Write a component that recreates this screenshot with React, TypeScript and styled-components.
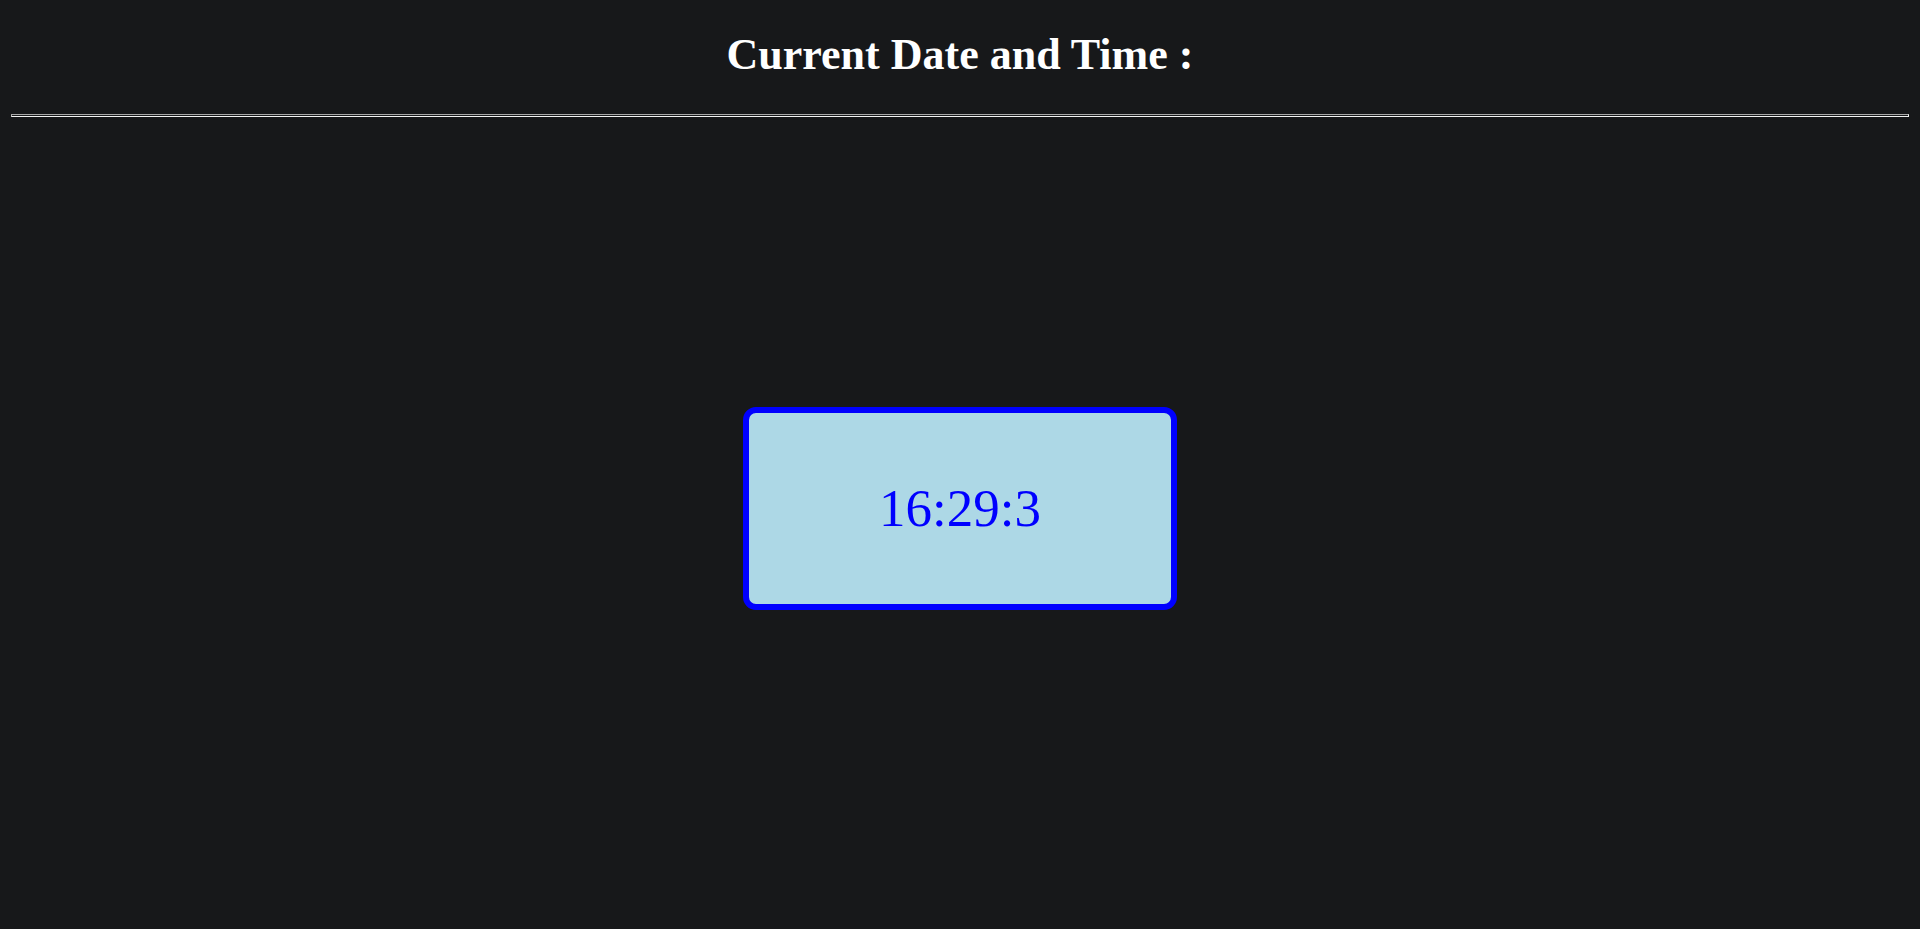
import React from "react";
import styled, { createGlobalStyle } from "styled-components";

const GlobalStyle = createGlobalStyle`
  html, body {
    margin: 0;
    padding: 0;
    background: #17181a;
  }
  body {
    font-family: "Liberation Serif", "Times New Roman", serif;
    min-height: 929px;
  }
`;

const Page = styled.div`
  display: flex;
  flex-direction: column;
  padding: 0 11px;
  min-height: 929px;
  box-sizing: border-box;
`;

const Title = styled.h1`
  margin: 29px 0 0;
  font-family: "Liberation Serif", "Times New Roman", serif;
  font-weight: 700;
  font-size: 44px;
  line-height: normal;
  color: #ffffff;
  text-align: center;
`;

const Divider = styled.div`
  margin-top: 34px;
  height: 1px;
  background: transparent;
  border-top: 1px solid #a8a8a8;
  border-left: 1px solid #a8a8a8;
  border-bottom: 1px solid #f2f2f2;
  border-right: 1px solid #f2f2f2;
`;

const Stage = styled.main`
  display: flex;
  justify-content: center;
  padding-top: 290px;
`;

const ClockCard = styled.div`
  width: 434px;
  height: 203px;
  box-sizing: border-box;
  border: 6px solid #0000ff;
  border-radius: 13px;
  background: #add8e6;
  display: flex;
  align-items: center;
  justify-content: center;
`;

const TimeText = styled.span`
  font-family: "Liberation Serif", "Times New Roman", serif;
  font-size: 53px;
  color: #0000ff;
  line-height: 1;
`;

export default function App() {
  return (
    <>
      <GlobalStyle />
      <Page>
        <Title>Current Date and Time :</Title>
        <Divider />
        <Stage>
          <ClockCard>
            <TimeText>16:29:3</TimeText>
          </ClockCard>
        </Stage>
      </Page>
    </>
  );
}
